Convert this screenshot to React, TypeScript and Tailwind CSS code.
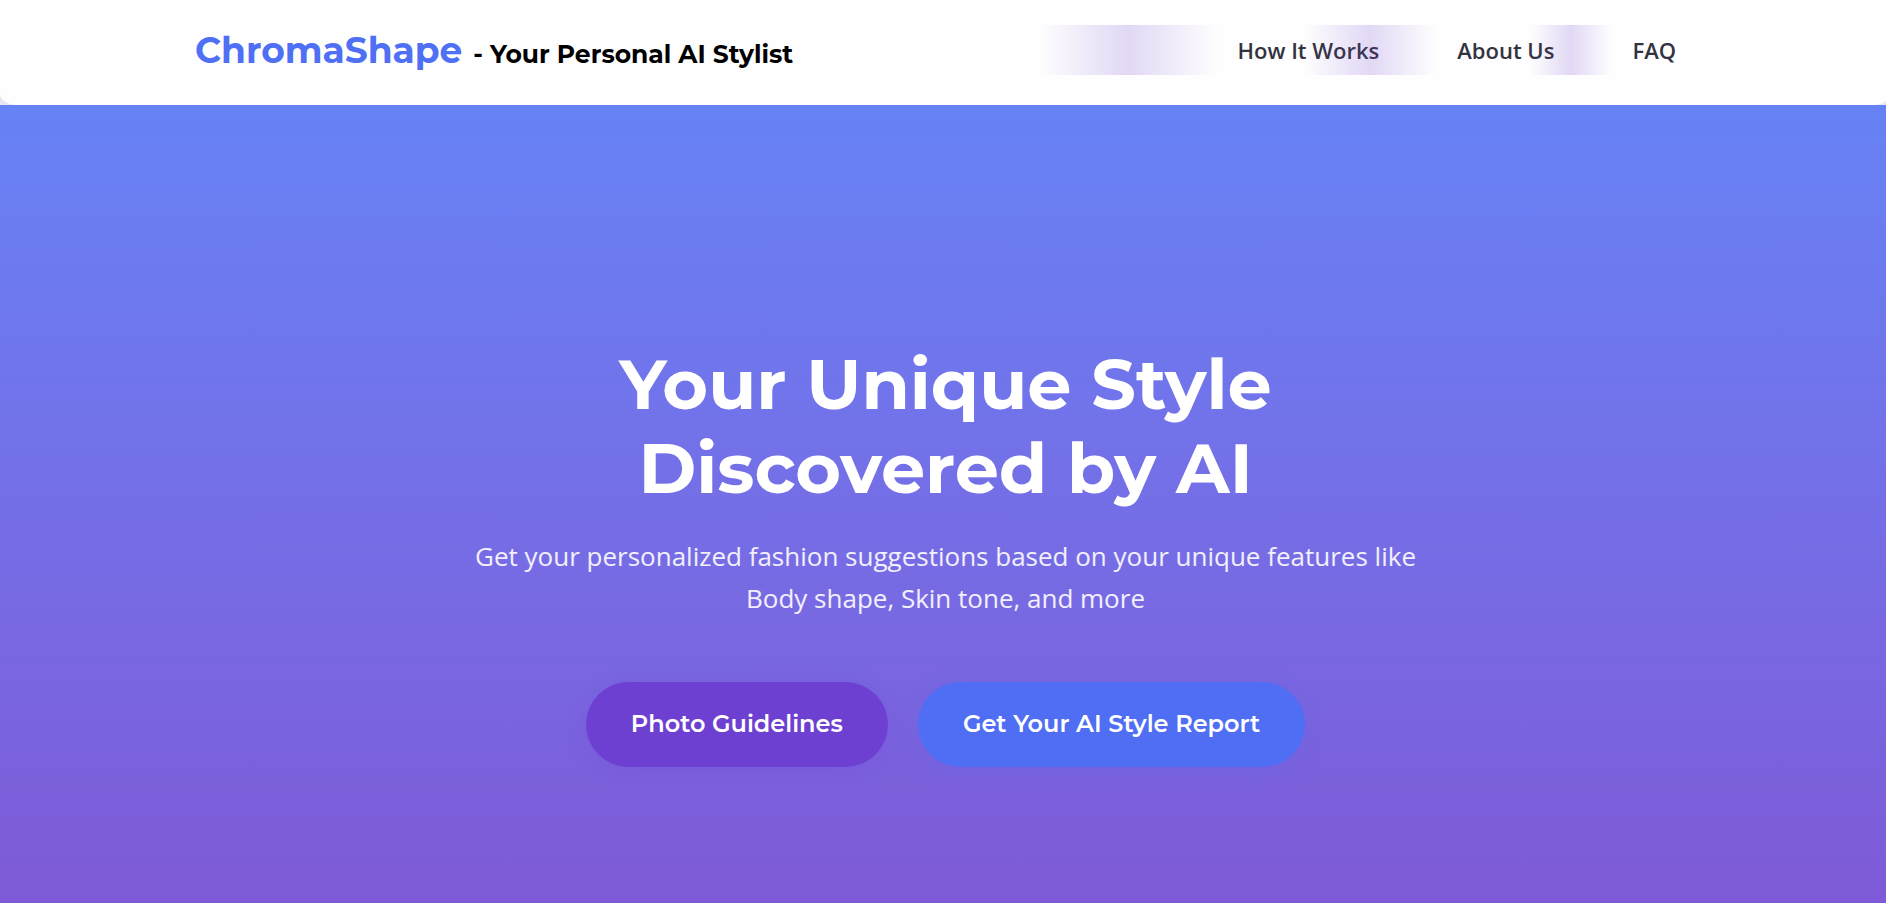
const links = [
  { label: "How It Works", href: "#how-it-works" },
  { label: "About Us", href: "#about" },
  { label: "FAQ", href: "#faq" },
];

const glow =
  "pointer-events-none absolute inset-y-0 bg-linear-to-r from-[#7040d000] via-[#7040d033] to-[#7040d000]";

function Header() {
  return (
    <div className="bg-[#e6e6f5]">
      <header className="rounded-bl-[18px_11px] rounded-br-[12px_6px] bg-[#fefefe]">
        <div className="mx-auto flex h-[105px] max-w-[1496px] items-center justify-between pr-[15px] pb-[5px]">
          <a href="#home" className="flex items-baseline gap-[11px] whitespace-nowrap font-['Montserrat','Inter',sans-serif] font-bold">
            <span className="text-[36px] leading-[50px] text-[#4f6ff5]">ChromaShape</span>
            <span className="text-[25px] text-black">- Your Personal AI Stylist</span>
          </a>
          <nav className="relative flex h-[50px] items-center gap-[78px] whitespace-nowrap text-[22px] font-semibold text-[#33333f]">
            {links.map((link) => (
              <a key={link.label} href={link.href}>
                {link.label}
              </a>
            ))}
            <span className={`${glow} right-[458px] w-[180px]`} />
            <span className={`${glow} right-[240px] w-[132px]`} />
            <span className={`${glow} right-[64px] w-[82px]`} />
          </nav>
        </div>
      </header>
    </div>
  );
}

function Hero() {
  return (
    <main className="flex flex-1 flex-col items-center bg-linear-to-b from-[#6682f5] to-[#7e5ad8] pt-[237px] pr-[24px] pb-[136px] pl-[29px] text-center text-white">
      <h1 className="font-['Montserrat','Inter',sans-serif] text-[70px] leading-[84px] font-bold">
        Your Unique Style
        <br />
        Discovered by AI
      </h1>
      <p className="mt-[25px] max-w-[1000px] text-[26px] leading-[42px] text-white/90">
        Get your personalized fashion suggestions based on your unique features like Body shape, Skin tone, and more
      </p>
      <div className="mt-[63px] flex flex-wrap justify-center gap-[30px] font-['Montserrat','Inter',sans-serif] text-[24px] font-semibold">
        <button className="h-[85px] rounded-full bg-[#6d40d2] px-[45px] pb-[2px] shadow-[0_5px_20px_#6d40d233]">
          Photo Guidelines
        </button>
        <button className="h-[85px] rounded-full bg-[#506ef3] px-[45px] pb-[2px] shadow-[0_5px_20px_#506ef333]">
          Get Your AI Style Report
        </button>
      </div>
    </main>
  );
}

export default function App() {
  return (
    <div className="flex min-h-screen flex-col font-['Open_Sans',sans-serif]">
      <Header />
      <Hero />
    </div>
  );
}
